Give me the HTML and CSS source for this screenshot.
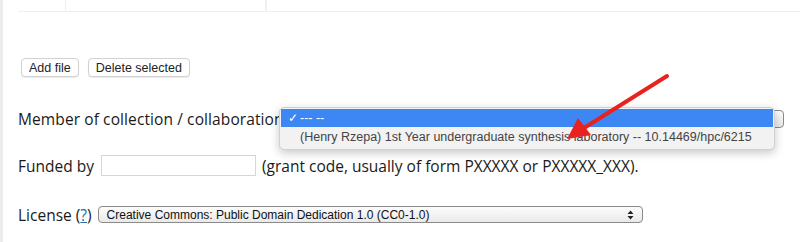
FILE: index.html
```html
<!DOCTYPE html>
<html>
<head>
    <title>Deposit files</title>
    <link rel="stylesheet" href="styles.css">
</head>
<body>
    <div class="page">
        <div class="table-stub">
            <div class="cell cell-a"></div>
            <div class="cell cell-b"></div>
            <div class="cell cell-c"></div>
        </div>

        <div class="buttons">
            <button type="button" class="btn">Add file</button>
            <button type="button" class="btn">Delete selected</button>
        </div>

        <div class="field member">
            <span class="label">Member of collection / collaboration</span>
            <div class="fake-select wide"></div>
            <ul class="popup">
                <li class="option selected"><span class="check">✓</span>--- --</li>
                <li class="option">(Henry Rzepa) 1st Year undergraduate synthesis laboratory -- 10.14469/hpc/6215</li>
            </ul>
        </div>

        <div class="field funded">
            <span class="label">Funded by</span>
            <input type="text" class="grant">
            <span class="hint">(grant code, usually of form PXXXXX or PXXXXX_XXX).</span>
        </div>

        <div class="field license">
            <span class="label">License (<a href="#" class="help">?</a>)</span>
            <div class="fake-select lic">
                <span>Creative Commons: Public Domain Dedication 1.0 (CC0-1.0)</span>
                <svg class="updown" width="7" height="10" viewBox="0 0 7 10">
                    <path d="M0.5 4 L3.5 0.5 L6.5 4 Z M0.5 6 L3.5 9.5 L6.5 6 Z" fill="#222"/>
                </svg>
            </div>
        </div>

        <!-- annotation arrow -->
        <svg class="arrow" width="120" height="80" viewBox="0 0 120 80">
            <line x1="107" y1="8" x2="24" y2="60" stroke="#e8221e" stroke-width="4" stroke-linecap="round"/>
            <polygon points="7,71 18,50 31,67" fill="#e8221e"/>
        </svg>
    </div>
</body>
</html>
```

FILE: styles.css
```css
body {
    margin: 0;
    background-color: white;
    color: #1a1a1a;
    font-family: "Open Sans", sans-serif;
}
.page {
    position: relative;
    height: 242px;
    border-left: 3px solid #ebebeb;
    padding-left: 15px;
    overflow: hidden;
}
.table-stub {
    display: flex;
    height: 11px;
    border-bottom: 1px solid #efefef;
}
.cell {
    border-right: 1px solid #efefef;
}
.cell-a {
    width: 47px;
}
.cell-b {
    width: 199px;
}
.buttons {
    display: flex;
    gap: 9px;
    margin-top: 46px;
    padding-left: 3px;
}
.btn {
    height: 19px;
    padding: 0 7px;
    background: white;
    border: 1px solid #d2d2d2;
    border-radius: 4px;
    box-shadow: 0 1px 1px rgba(0, 0, 0, 0.08);
    font-family: "Liberation Sans", Arial, sans-serif;
    font-size: 12.5px;
    color: #222;
}
.field {
    position: relative;
    display: flex;
    align-items: center;
    font-size: 15.5px;
}
.member {
    margin-top: 33px;
    height: 18px;
}
.member .label {
    letter-spacing: 0.1px;
}
.funded {
    margin-top: 27px;
    height: 21px;
}
.license {
    margin-top: 30px;
    height: 17px;
}
.fake-select {
    box-sizing: border-box;
    border: 1px solid #8a8a8a;
    border-radius: 4px;
    background: linear-gradient(#fcfcfc, #e9e9e9);
}
.wide {
    width: 500px;
    height: 18px;
}
.popup {
    position: absolute;
    left: 261px;
    top: -3px;
    width: 494px;
    margin: 0;
    padding: 1px 0 2px;
    list-style: none;
    background: #f2f2f2;
    border: 1px solid #d0d0d0;
    border-radius: 5px;
    box-shadow: 0 3px 10px rgba(0, 0, 0, 0.22);
    font-family: "Liberation Sans", Arial, sans-serif;
    font-size: 12.5px;
    color: #444;
}
.option {
    height: 20px;
    line-height: 20px;
    padding-left: 20px;
    white-space: nowrap;
}
.option.selected {
    position: relative;
    background: #3d87f5;
    color: white;
    height: 18px;
    line-height: 18px;
    margin: 0 1px;
    padding-left: 19px;
}
.check {
    position: absolute;
    left: 7px;
    font-size: 12px;
}
.grant {
    box-sizing: border-box;
    width: 155px;
    height: 21px;
    margin: 0 6px 0 7px;
    border: 1px solid #d6d6d6;
}
.hint {
    white-space: nowrap;
}
.help {
    color: #2670a5;
}
.lic {
    display: flex;
    align-items: center;
    justify-content: space-between;
    width: 545px;
    height: 17px;
    margin-left: 6px;
    padding: 0 8px;
    font-family: "Liberation Sans", Arial, sans-serif;
    font-size: 12px;
    color: #111;
}
.arrow {
    position: absolute;
    left: 557px;
    top: 68px;
}
```
